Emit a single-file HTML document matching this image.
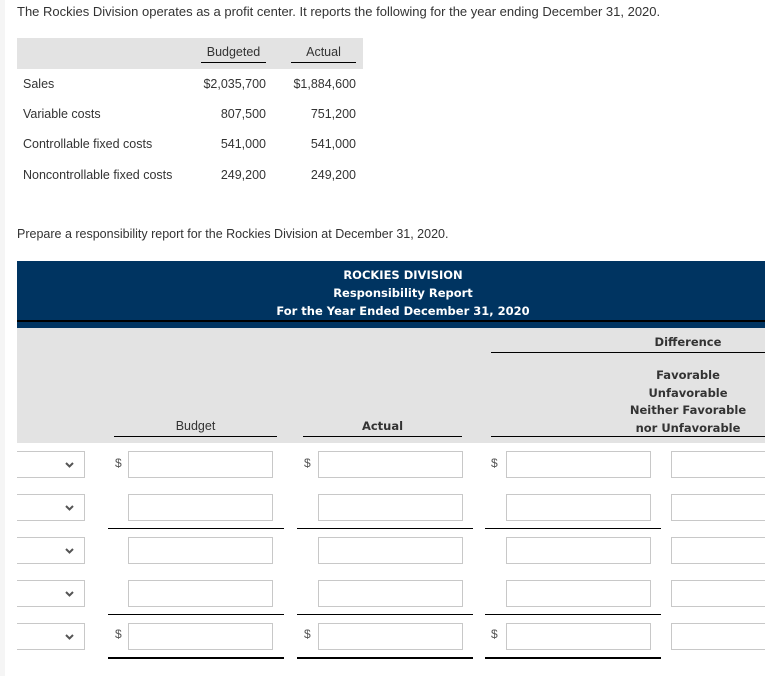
<!DOCTYPE html>
<html><head><style>
*{margin:0;padding:0;box-sizing:border-box}
body{width:765px;height:676px;position:relative;background:#fff;font-family:"Liberation Sans",sans-serif;color:#333;overflow:hidden}
.a{position:absolute;white-space:nowrap}
.strip{position:absolute;left:0;top:0;width:5px;height:676px;background:#f5f5f5}
.t{font-size:12.5px}
.r{text-align:right}
.inp{position:absolute;height:27px;border:1px solid #c8c8c8;background:#fff}
.sel{position:absolute;left:17px;width:68px;height:27px;border:1px solid #c8c8c8;border-left:none;background:#fff}
.sel svg{position:absolute;right:10px;top:10px}
.ln{position:absolute;height:1px;background:#000}
.hd{font-family:"DejaVu Sans",sans-serif;font-weight:bold;font-size:11.5px;color:#fff;text-align:center;position:absolute;left:29px;width:748px}
.gh{font-family:"DejaVu Sans",sans-serif;font-size:11.5px;color:#333;position:absolute;text-align:center}
.d{font-size:12px;color:#555}
</style></head><body>
<div class="strip"></div>
<div class="a t" style="left:17px;top:4px;font-size:13px">The Rockies Division operates as a profit center. It reports the following for the year ending December 31, 2020.</div>

<div class="a" style="left:17px;top:38px;width:346px;height:31px;background:#e3e3e3"></div>
<div class="a t" style="left:201px;top:45px;width:65px;text-align:center">Budgeted</div>
<div class="a t" style="left:291px;top:45px;width:65px;text-align:center">Actual</div>
<div class="ln" style="left:201px;top:62px;width:65px"></div>
<div class="ln" style="left:291px;top:62px;width:65px"></div>

<div class="a t" style="left:23px;top:77px">Sales</div>
<div class="a t" style="left:23px;top:107px">Variable costs</div>
<div class="a t" style="left:23px;top:137px">Controllable fixed costs</div>
<div class="a t" style="left:23px;top:168px">Noncontrollable fixed costs</div>
<div class="a t r" style="left:166px;width:100px;top:77px">$2,035,700</div>
<div class="a t r" style="left:166px;width:100px;top:107px">807,500</div>
<div class="a t r" style="left:166px;width:100px;top:137px">541,000</div>
<div class="a t r" style="left:166px;width:100px;top:168px">249,200</div>
<div class="a t r" style="left:256px;width:100px;top:77px">$1,884,600</div>
<div class="a t r" style="left:256px;width:100px;top:107px">751,200</div>
<div class="a t r" style="left:256px;width:100px;top:137px">541,000</div>
<div class="a t r" style="left:256px;width:100px;top:168px">249,200</div>

<div class="a t" style="left:17px;top:227px">Prepare a responsibility report for the Rockies Division at December 31, 2020.</div>

<div class="a" style="left:17px;top:261px;width:748px;height:67px;background:#003461"></div>
<div class="ln" style="left:17px;top:320px;width:748px;height:2px"></div>
<div class="hd" style="top:268px">ROCKIES DIVISION</div>
<div class="hd" style="top:286px">Responsibility Report</div>
<div class="hd" style="top:304px">For the Year Ended December 31, 2020</div>

<div class="a" style="left:17px;top:328px;width:748px;height:115px;background:#e3e3e3"></div>
<div class="ln" style="left:491px;top:352px;width:274px"></div>
<div class="gh" style="left:611px;width:154px;top:367px;line-height:17.5px;font-weight:bold">Favorable<br>Unfavorable<br>Neither Favorable<br>nor Unfavorable</div>
<div class="gh" style="left:114px;width:163px;top:419px;font-family:'Liberation Sans',sans-serif;font-size:12.5px">Budget</div>
<div class="gh" style="left:303px;width:159px;top:419px;font-weight:bold">Actual</div>
<div class="ln" style="left:114px;top:436px;width:163px"></div>
<div class="ln" style="left:303px;top:436px;width:159px"></div>
<div class="ln" style="left:491px;top:436px;width:274px"></div>
<div class="gh" style="left:611px;width:154px;top:335px;font-weight:bold">Difference</div>

<div class="sel" style="top:451px"><svg width="9" height="6"><path d="M1 1L4.5 4.5L8 1" stroke="#555" stroke-width="2" fill="none"/></svg></div>
<div class="sel" style="top:494px"><svg width="9" height="6"><path d="M1 1L4.5 4.5L8 1" stroke="#555" stroke-width="2" fill="none"/></svg></div>
<div class="sel" style="top:537px"><svg width="9" height="6"><path d="M1 1L4.5 4.5L8 1" stroke="#555" stroke-width="2" fill="none"/></svg></div>
<div class="sel" style="top:580px"><svg width="9" height="6"><path d="M1 1L4.5 4.5L8 1" stroke="#555" stroke-width="2" fill="none"/></svg></div>
<div class="sel" style="top:623px"><svg width="9" height="6"><path d="M1 1L4.5 4.5L8 1" stroke="#555" stroke-width="2" fill="none"/></svg></div>

<div class="a d" style="left:115px;top:456px">$</div>
<div class="a d" style="left:304px;top:456px">$</div>
<div class="a d" style="left:491px;top:456px">$</div>
<div class="a d" style="left:115px;top:627px">$</div>
<div class="a d" style="left:304px;top:627px">$</div>
<div class="a d" style="left:491px;top:627px">$</div>

<div class="inp" style="left:128px;top:451px;width:145px"></div>
<div class="inp" style="left:318px;top:451px;width:145px"></div>
<div class="inp" style="left:506px;top:451px;width:145px"></div>
<div class="inp" style="left:671px;top:451px;width:100px"></div>
<div class="inp" style="left:128px;top:494px;width:145px"></div>
<div class="inp" style="left:318px;top:494px;width:145px"></div>
<div class="inp" style="left:506px;top:494px;width:145px"></div>
<div class="inp" style="left:671px;top:494px;width:100px"></div>
<div class="inp" style="left:128px;top:537px;width:145px"></div>
<div class="inp" style="left:318px;top:537px;width:145px"></div>
<div class="inp" style="left:506px;top:537px;width:145px"></div>
<div class="inp" style="left:671px;top:537px;width:100px"></div>
<div class="inp" style="left:128px;top:580px;width:145px"></div>
<div class="inp" style="left:318px;top:580px;width:145px"></div>
<div class="inp" style="left:506px;top:580px;width:145px"></div>
<div class="inp" style="left:671px;top:580px;width:100px"></div>
<div class="inp" style="left:128px;top:623px;width:145px"></div>
<div class="inp" style="left:318px;top:623px;width:145px"></div>
<div class="inp" style="left:506px;top:623px;width:145px"></div>
<div class="inp" style="left:671px;top:623px;width:100px"></div>

<div class="ln" style="left:108px;top:528px;width:176px"></div>
<div class="ln" style="left:297px;top:528px;width:176px"></div>
<div class="ln" style="left:485px;top:528px;width:176px"></div>
<div class="ln" style="left:108px;top:614px;width:176px"></div>
<div class="ln" style="left:297px;top:614px;width:176px"></div>
<div class="ln" style="left:485px;top:614px;width:176px"></div>
<div class="ln" style="left:108px;top:657px;width:176px;height:2px"></div>
<div class="ln" style="left:297px;top:657px;width:176px;height:2px"></div>
<div class="ln" style="left:485px;top:657px;width:176px;height:2px"></div>
</body></html>
